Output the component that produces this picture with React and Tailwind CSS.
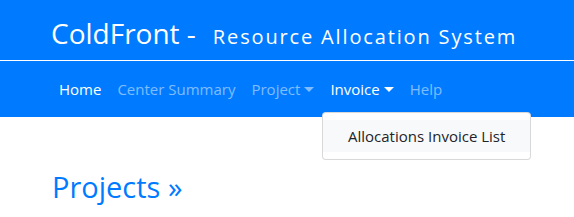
import React from "react";

function Caret() {
  return (
    <span className="ml-[4px] inline-block h-0 w-0 border-x-[5px] border-t-[5px] border-x-transparent border-t-current align-[3px]" />
  );
}

export default function App() {
  return (
    <div className="relative h-[217px] w-[574px] overflow-hidden bg-white font-['Open_Sans',sans-serif]">
      <div className="bg-[#007bff]">
        <div className="flex h-[60px] items-baseline pl-[51px] pt-[19px] text-white">
          <span className="text-[28px] leading-[28px]">ColdFront -</span>
          <span className="ml-[17px] text-[20px] leading-[20px] tracking-[1.85px]">Resource Allocation System</span>
        </div>
        <div className="h-px bg-white" />
        <nav className="flex h-[56px] items-center pl-[51px] text-[15px]">
          <a className="px-[8px] text-white">Home</a>
          <a className="px-[8px] text-white/50">Center Summary</a>
          <a className="px-[8px] text-white/50">Project<Caret /></a>
          <a className="px-[8px] text-white">Invoice<Caret /></a>
          <a className="px-[8px] text-white/50">Help</a>
        </nav>
      </div>
      <div className="px-[52px] pt-[55px]">
        <h2 className="text-[29px] font-medium leading-none text-[#007bff]">Projects »</h2>
      </div>
      <div className="absolute left-[322px] top-[112px] w-[209px] rounded-[4px] border border-black/15 bg-white py-[7px]">
        <div className="whitespace-nowrap bg-[#f8f9fa] px-[25px] py-[4px] text-[15px] leading-[24px] text-[#212529]">Allocations Invoice List</div>
      </div>
    </div>
  );
}
